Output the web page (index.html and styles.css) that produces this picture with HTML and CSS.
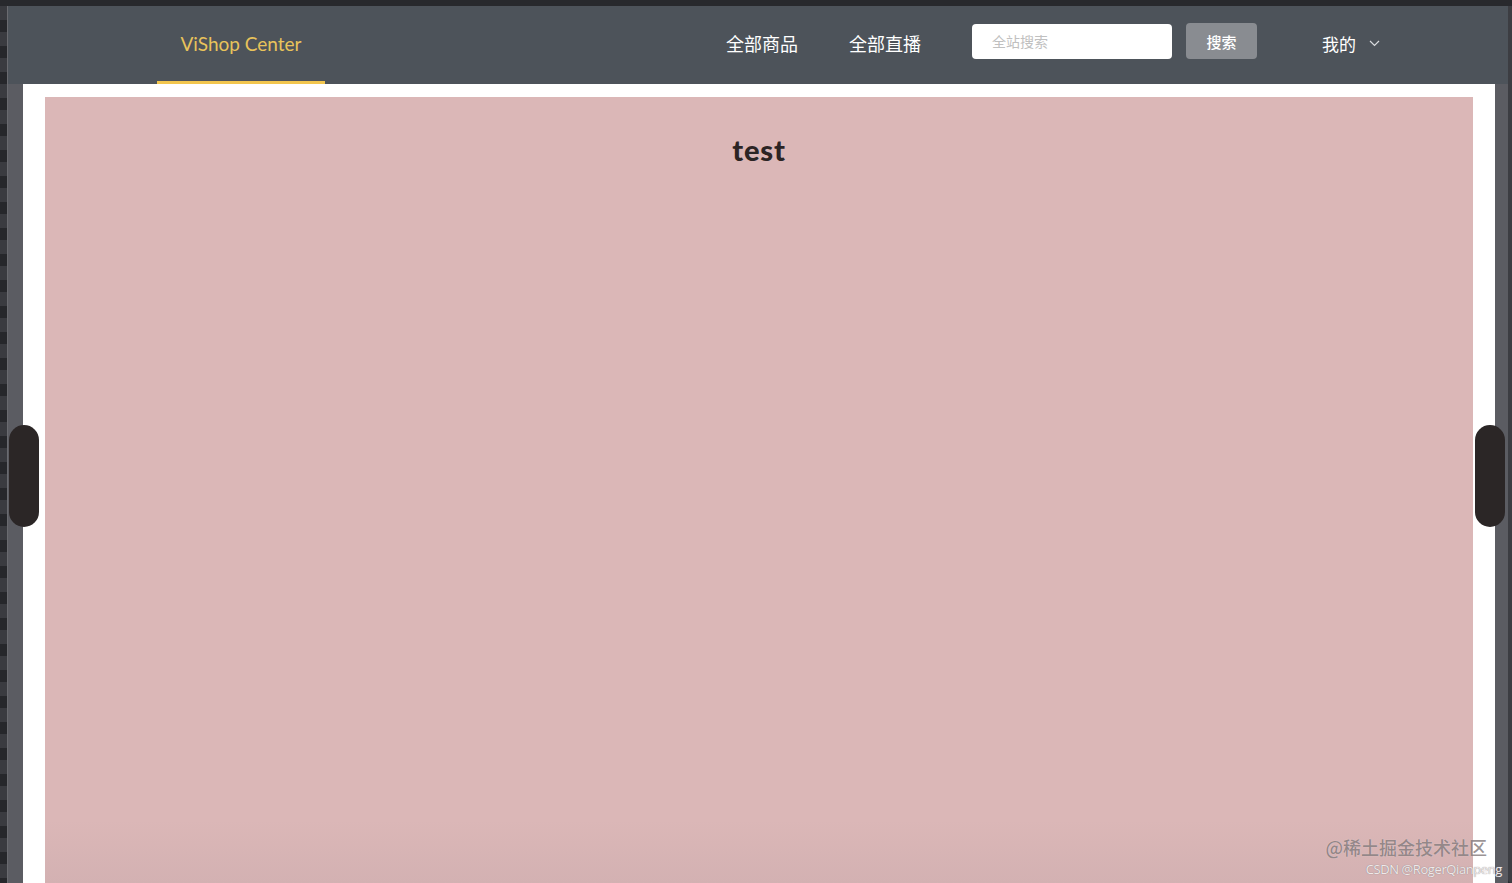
FILE: index.html
```html
<!DOCTYPE html>
<html lang="zh-CN">
<head>
<meta charset="UTF-8">
<meta name="viewport" content="width=device-width, initial-scale=1.0">
<title>ViShop Center</title>
<link rel="stylesheet" href="styles.css">
</head>
<body>

<div class="topbar"></div>
<div class="main">
    <div class="ide-strip"></div>
    <div class="window">
        <div class="header">
            <a class="brand">ViShop Center</a>
            <a class="nav-item first">全部商品</a>
            <a class="nav-item">全部直播</a>
            <input class="search" type="text" placeholder="全站搜索">
            <button class="search-btn">搜索</button>
            <span class="mine">我的</span>
            <svg class="chevron" width="11" height="7" viewBox="0 0 11 7"><path d="M1 1l4.5 4.5L10 1" fill="none" stroke="#d9dbde" stroke-width="1.2"/></svg>
        </div>
        <div class="stage">
            <div class="panel">
                <div class="content">
                    <h2 class="title">test</h2>
                </div>
            </div>
            <div class="handle left"></div>
            <div class="handle right"></div>
            <div class="mark">
                <div class="mark-main">@稀土掘金技术社区</div>
                <div class="mark-sub">CSDN @RogerQianpeng</div>
            </div>
        </div>
    </div>
    <div class="right-edge"></div>
</div>

</body>
</html>
```

FILE: styles.css
```css
html, body {
    margin: 0;
    height: 100%;
    overflow: hidden;
}
body {
    background-color: #2b2c30;
    font-family: "Noto Sans CJK SC", "Noto Sans", sans-serif;
    display: flex;
    flex-direction: column;
}
.topbar {
    height: 6px;
    background-color: #28292d;
}
.main {
    flex: 1;
    display: flex;
}
.ide-strip {
    width: 7px;
    background: repeating-linear-gradient(#3a3b40 0 14px, #26272b 14px 26px);
    border-right: 1px solid #6a6b70;
}
.window {
    flex: 1;
    display: flex;
    flex-direction: column;
    background-color: #5b5c62;
}
.right-edge {
    width: 4px;
    background-color: #3c3d42;
    border-bottom-left-radius: 6px;
}

/* header */
.header {
    height: 78px;
    background-color: #4d535a;
    display: flex;
    align-items: center;
    padding-right: 128px;
    color: #fff;
}
.header > * {
    position: relative;
    top: -2px;
}
.header > .brand {
    top: 0;
}
.brand {
    margin-left: 149px;
    width: 168px;
    height: 78px;
    box-sizing: border-box;
    border-bottom: 3px solid #f2c64e;
    display: flex;
    align-items: center;
    justify-content: center;
    font-family: "Lato", sans-serif;
    font-size: 19px;
    color: #e9c35b;
}
.nav-item {
    font-size: 18px;
    margin-right: 51px;
}
.nav-item.first {
    margin-left: auto;
}
.search {
    width: 200px;
    height: 35px;
    box-sizing: border-box;
    border: none;
    border-radius: 4px;
    padding: 0 20px;
    font-family: inherit;
    font-size: 14px;
    margin-top: -4px;
    outline: none;
}
.search::placeholder {
    color: #c0c0c0;
}
.search-btn {
    width: 71px;
    height: 36px;
    margin-left: 14px;
    margin-top: -4px;
    border: none;
    border-radius: 4px;
    background-color: #898c91;
    color: #fff;
    font-family: inherit;
    font-size: 15px;
    font-weight: 500;
}
.mine {
    margin-left: 65px;
    font-size: 17px;
}
.chevron {
    margin-left: 13px;
}

/* content */
.stage {
    flex: 1;
    position: relative;
    display: flex;
    padding: 0 13px 0 15px;
}
.panel {
    flex: 1;
    background-color: #fff;
    padding: 13px 22px 0 22px;
    display: flex;
}
.content {
    flex: 1;
    background: linear-gradient(#dbb7b7 0, #dbb7b7 92%, #d3b1b2 100%);
}
.title {
    margin: 35px 0 0;
    text-align: center;
    font-family: "Lato", sans-serif;
    font-weight: 900;
    font-size: 29px;
    color: #2b2424;
    letter-spacing: 0.8px;
}
.handle {
    position: absolute;
    top: 341px;
    width: 30px;
    height: 102px;
    border-radius: 15px;
    background-color: #2b2626;
}
.handle.left {
    left: 1px;
}
.handle.right {
    right: 3px;
}
.mark {
    position: absolute;
    right: 6px;
    bottom: 5px;
    text-align: right;
}
.mark-main {
    font-size: 18px;
    font-weight: 500;
    color: rgba(110, 100, 102, 0.7);
    margin-right: 15px;
    text-shadow: 0 0 1px rgba(255, 255, 255, 0.5);
}
.mark-sub {
    font-family: "Open Sans", sans-serif;
    font-size: 13px;
    color: #efe9ea;
    letter-spacing: -0.4px;
    text-shadow: 0 0 1px #7a7577;
}
```
